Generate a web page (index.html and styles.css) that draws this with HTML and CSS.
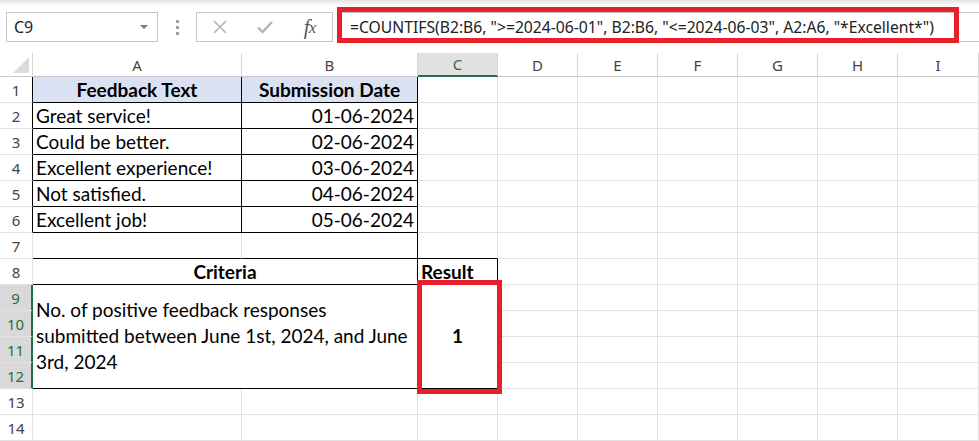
FILE: index.html
```html
<!DOCTYPE html>
<html lang="en">
<head>
  <meta charset="UTF-8">
  <title>COUNTIFS - Feedback</title>
  <link rel="stylesheet" href="styles.css">
</head>
<body>
  <div class="top-strip"></div>

  <div class="formula-bar">
    <div class="name-box">C9<span class="caret"></span></div>
    <div class="grip"><i></i><i></i><i></i></div>
    <div class="fx-box">
      <span class="fx-slot">
        <svg width="16" height="16" viewBox="0 0 16 16"><path d="M2 2 L14 14 M14 2 L2 14" stroke="#b4b4b4" stroke-width="1.6" fill="none"/></svg>
      </span>
      <span class="fx-slot">
        <svg width="18" height="16" viewBox="0 0 18 16"><path d="M2 8.5 L6.5 13 L16 3" stroke="#b4b4b4" stroke-width="2.4" fill="none"/></svg>
      </span>
      <span class="fx-slot fx">f<span>x</span></span>
    </div>
    <div class="formula">
      <span class="formula-text">=COUNTIFS(B2:B6, "&gt;=2024-06-01", B2:B6, "&lt;=2024-06-03", A2:A6, "*Excellent*")</span>
      <div class="highlight"></div>
    </div>
  </div>

  <table class="sheet">
    <colgroup>
      <col class="c-head">
      <col class="c-a">
      <col class="c-b">
      <col class="c-n"><col class="c-n"><col class="c-n"><col class="c-n">
      <col class="c-n"><col class="c-n"><col class="c-last">
    </colgroup>
    <thead>
      <tr>
        <th class="corner"><span class="tri"></span></th>
        <th>A</th><th>B</th><th class="sel-col">C</th>
        <th>D</th><th>E</th><th>F</th><th>G</th><th>H</th><th>I</th>
      </tr>
    </thead>
    <tbody>
      <tr>
        <th class="rh br">1</th>
        <td class="hdr bb br">Feedback Text</td>
        <td class="hdr bb br">Submission Date</td>
        <td></td><td></td><td></td><td></td><td></td><td></td><td></td>
      </tr>
      <tr>
        <th class="rh br">2</th>
        <td class="bb br">Great service!</td>
        <td class="num bb br">01-06-2024</td>
        <td></td><td></td><td></td><td></td><td></td><td></td><td></td>
      </tr>
      <tr>
        <th class="rh br">3</th>
        <td class="bb br">Could be better.</td>
        <td class="num bb br">02-06-2024</td>
        <td></td><td></td><td></td><td></td><td></td><td></td><td></td>
      </tr>
      <tr>
        <th class="rh br">4</th>
        <td class="bb br">Excellent experience!</td>
        <td class="num bb br">03-06-2024</td>
        <td></td><td></td><td></td><td></td><td></td><td></td><td></td>
      </tr>
      <tr>
        <th class="rh br">5</th>
        <td class="bb br">Not satisfied.</td>
        <td class="num bb br">04-06-2024</td>
        <td></td><td></td><td></td><td></td><td></td><td></td><td></td>
      </tr>
      <tr>
        <th class="rh br">6</th>
        <td class="bb br">Excellent job!</td>
        <td class="num bb br">05-06-2024</td>
        <td></td><td></td><td></td><td></td><td></td><td></td><td></td>
      </tr>
      <tr>
        <th class="rh">7</th>
        <td class="bb"></td><td class="bb br"></td><td class="bb"></td>
        <td></td><td></td><td></td><td></td><td></td><td></td><td></td>
      </tr>
      <tr>
        <th class="rh">8</th>
        <td class="title bb br" colspan="2">Criteria</td>
        <td class="bold bb br">Result</td>
        <td></td><td></td><td></td><td></td><td></td><td></td><td></td>
      </tr>
      <tr>
        <th class="rh sel-row">9</th>
        <td class="wrap bb br" colspan="2" rowspan="4">No. of positive feedback responses<br>submitted between June 1st, 2024, and June<br>3rd, 2024</td>
        <td class="result bb br" rowspan="4">1<div class="highlight"></div></td>
        <td></td><td></td><td></td><td></td><td></td><td></td><td></td>
      </tr>
      <tr>
        <th class="rh sel-row">10</th>
        <td></td><td></td><td></td><td></td><td></td><td></td><td></td>
      </tr>
      <tr>
        <th class="rh sel-row">11</th>
        <td></td><td></td><td></td><td></td><td></td><td></td><td></td>
      </tr>
      <tr>
        <th class="rh sel-row">12</th>
        <td></td><td></td><td></td><td></td><td></td><td></td><td></td>
      </tr>
      <tr>
        <th class="rh">13</th>
        <td></td><td></td><td></td><td></td><td></td><td></td><td></td><td></td><td></td><td></td>
      </tr>
      <tr>
        <th class="rh">14</th>
        <td></td><td></td><td></td><td></td><td></td><td></td><td></td><td></td><td></td><td></td>
      </tr>
    </tbody>
  </table>
</body>
</html>
```

FILE: styles.css
```css
body {
  margin: 0;
  background: #fff;
  font-family: "Lato", sans-serif;
  overflow: hidden;
}

.top-strip { height: 6px; background: linear-gradient(#e2e2e2, #fff); }

/* formula bar */
.formula-bar {
  display: flex; align-items: center;
  height: 30px; padding: 6px 0 0 6px; margin-bottom: 11px;
  font-family: "Noto Sans", sans-serif;
}
.name-box {
  position: relative; box-sizing: border-box;
  width: 152px; height: 30px; padding-left: 7px;
  display: flex; align-items: center;
  border: 1px solid #c6c6c6;
  font-size: 16px; color: #222;
}
.caret {
  position: absolute; right: 9px; top: 12px;
  border-left: 4px solid transparent; border-right: 4px solid transparent;
  border-top: 4px solid #7a7a7a;
}
.grip {
  width: 38px; display: flex; flex-direction: column;
  align-items: center; gap: 3px;
}
.grip i { width: 3px; height: 3px; background: #a0a0a0; }
.fx-box {
  box-sizing: border-box; width: 137px; height: 30px;
  display: flex; align-items: center;
  border: 1px solid #c6c6c6;
}
.fx-slot { width: 45px; display: flex; justify-content: center; align-items: center; }
.fx {
  font-family: "Liberation Serif", serif; font-style: italic;
  font-size: 21px; color: #555; letter-spacing: -1px;
}
.fx span { font-size: 17px; position: relative; top: 1px; }
.formula {
  position: relative; flex: 1; box-sizing: border-box;
  height: 30px; margin-left: 4px; padding-left: 12px;
  display: flex; align-items: center;
  border: 1px solid #c6c6c6; border-right: none;
}
.formula-text { font-size: 15.7px; color: #222; white-space: nowrap; }
.formula .highlight { left: -1px; top: -6px; width: 622px; height: 36px; }

.highlight {
  position: absolute; box-sizing: border-box;
  border: 5px solid #e8202a;
}

/* sheet grid */
.sheet {
  border-collapse: separate; border-spacing: 0;
  table-layout: fixed; width: 979px;
}
.c-head { width: 33px; }
.c-a { width: 209px; }
.c-b { width: 176px; }
.c-n { width: 80px; }
.c-last { width: 81px; }

.sheet th, .sheet td {
  box-sizing: border-box; height: 26px; padding: 0 3px;
  border-right: 1px solid #e1e1e1; border-bottom: 1px solid #e1e1e1;
  white-space: nowrap; overflow: hidden;
}
.sheet thead th {
  height: 24px; padding: 0;
  font: 15px "Noto Sans", sans-serif; color: #444;
  border-right-color: #d6d6d6; border-bottom-color: #c8c8c8;
}
.sheet thead th.sel-col {
  background: #e1e1e1; color: #1e6f42;
  border-bottom: 2px solid #1e7145;
}
.corner { position: relative; }
.tri {
  position: absolute; right: 3px; bottom: 3px;
  border-left: 16px solid transparent; border-bottom: 16px solid #dcdcdc;
}

.sheet td {
  font-size: 19px; line-height: 20px; color: #000;
  vertical-align: bottom; padding-bottom: 2px;
}
.rh {
  padding: 0; font: 15px "Noto Sans", sans-serif; color: #444;
  font-weight: normal; text-align: center; vertical-align: middle;
  border-right-color: #d6d6d6;
}
.rh.sel-row {
  background: #d9d9d9; color: #1e6f42;
  border-right: 2px solid #1e7145;
}

.bb { border-bottom-color: #000 !important; }
.br { border-right-color: #000 !important; }

.hdr { background: #d9e1f2; font-weight: bold; text-align: center; }
.num { text-align: right; }
.title { font-weight: bold; text-align: center; }
.bold { font-weight: bold; overflow: visible !important; }
.wrap { white-space: normal !important; vertical-align: middle !important; line-height: 26px !important; }
.result {
  position: relative; overflow: visible !important;
  font-weight: bold; text-align: center; vertical-align: middle !important;
}
.result .highlight { left: -1px; top: -5px; right: -5px; bottom: -6px; }
```
